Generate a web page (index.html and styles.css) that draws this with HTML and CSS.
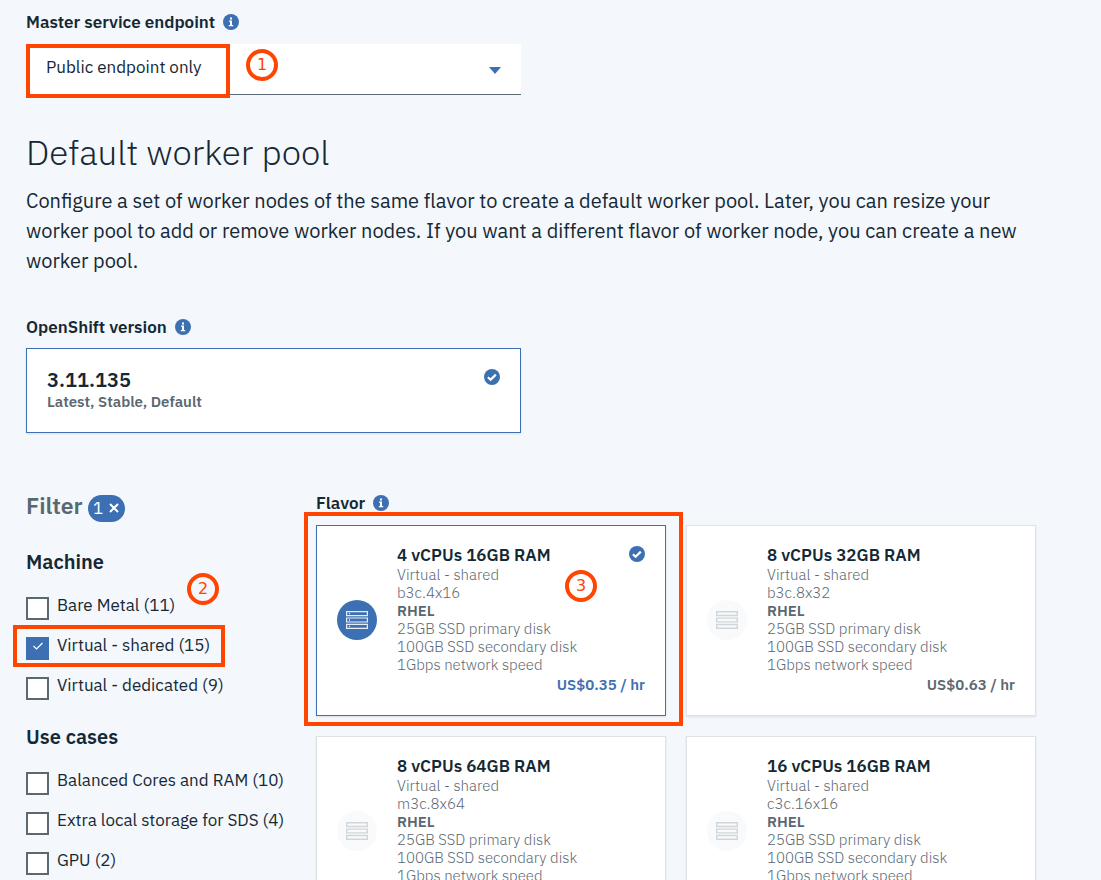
FILE: index.html
```
<!DOCTYPE html>
<html lang="en">
<head>
<meta charset="utf-8">
<meta name="viewport" content="width=device-width, initial-scale=1">
<title>Create cluster</title>
<link rel="stylesheet" href="styles.css">
</head>
<body>
<svg class="defs" aria-hidden="true">
  <symbol id="info" viewBox="0 0 16 16"><circle cx="8" cy="8" r="8" fill="#3d70b2"/><path d="M7 3.5h2v2H7zM6 6.5h3v4.5h1.2v1.2H5.8V11H7V7.7H6z" fill="#fff"/></symbol>
  <symbol id="check" viewBox="0 0 16 16"><circle cx="8" cy="8" r="8" fill="#3d70b2"/><path d="M3.9 8.2l2.7 2.6 5.2-5.2" fill="none" stroke="#fff" stroke-width="2.2"/></symbol>
  <symbol id="server" viewBox="0 0 22 18"><path d="M.7.7h20.6v3.8H.7zM.7 7.1h20.6v3.8H.7zM.7 13.5h20.6v3.8H.7z" fill="none" stroke="currentColor" stroke-width="1.4"/></symbol>
  <symbol id="server-on" viewBox="0 0 22 18"><path d="M.6.6h20.8v4H.6zM.6 7h20.8v4H.6zM.6 13.4h20.8v4H.6z" fill="none" stroke="currentColor" stroke-width="1.2"/><path d="M3.5 1.8v1.6M3.5 8.2v1.6M3.5 14.6v1.6" stroke="currentColor"/></symbol>
</svg>
<main class="page">
  <section class="half">
    <div class="caption"><label for="endpoint">Master service endpoint</label><svg class="icon"><use href="#info"/></svg></div>
    <div class="select-wrap">
      <select id="endpoint" class="select"><option>Public endpoint only</option></select>
      <svg class="caret" viewBox="0 0 12 7"><path d="M0 0h12L6 7z" fill="#3d70b2"/></svg>
      <span class="mark mark-endpoint"></span>
      <span class="step step-endpoint">1</span>
    </div>
  </section>

  <section class="intro">
    <h1>Default worker pool</h1>
    <p>Configure a set of worker nodes of the same flavor to create a default worker pool. Later, you can resize your worker pool to add or remove worker nodes. If you want a different flavor of worker node, you can create a new worker pool.</p>
  </section>

  <section class="half version">
    <div class="caption"><span>OpenShift version</span><svg class="icon"><use href="#info"/></svg></div>
    <label class="card version-card selected">
      <input class="hidden-input" type="radio" name="version" checked>
      <span class="version-text"><strong>3.11.135</strong><span>Latest, Stable, Default</span></span>
      <svg class="icon"><use href="#check"/></svg>
    </label>
  </section>

  <div class="columns">
    <aside class="filters">
      <div class="filter-head"><h2>Filter</h2><button class="pill" type="button" aria-label="Clear 1 filter"><span>1</span><svg viewBox="0 0 10 10"><path d="M1 1l8 8M9 1l-8 8" stroke="#fff" stroke-width="2"/></svg></button></div>
      <fieldset>
        <legend>Machine</legend>
        <label class="option"><input type="checkbox"><span>Bare Metal (11)</span></label>
        <label class="option"><input type="checkbox" checked><span>Virtual - shared (15)</span></label>
        <label class="option"><input type="checkbox"><span>Virtual - dedicated (9)</span></label>
        <span class="mark mark-machine"></span>
        <span class="step step-machine">2</span>
      </fieldset>
      <fieldset>
        <legend>Use cases</legend>
        <label class="option"><input type="checkbox"><span>Balanced Cores and RAM (10)</span></label>
        <label class="option"><input type="checkbox"><span>Extra local storage for SDS (4)</span></label>
        <label class="option"><input type="checkbox"><span>GPU (2)</span></label>
      </fieldset>
    </aside>
    <section class="flavors">
      <div class="caption"><span>Flavor</span><svg class="icon"><use href="#info"/></svg></div>
      <div class="grid">
        <label class="card flavor selected">
          <input class="hidden-input" type="radio" name="flavor" checked>
          <span class="disc"><svg><use href="#server-on"/></svg></span>
          <span class="specs">
            <span class="title"><strong>4 vCPUs 16GB RAM</strong><svg class="icon"><use href="#check"/></svg></span>
            <span>Virtual - shared</span><span>b3c.4x16</span><b>RHEL</b><span>25GB SSD primary disk</span><span>100GB SSD secondary disk</span><span>1Gbps network speed</span>
            <span class="price">US$0.35 / hr</span>
          </span>
          <span class="mark mark-flavor"></span>
          <span class="step step-flavor">3</span>
        </label>
        <label class="card flavor">
          <input class="hidden-input" type="radio" name="flavor">
          <span class="disc"><svg><use href="#server"/></svg></span>
          <span class="specs">
            <span class="title"><strong>8 vCPUs 32GB RAM</strong></span>
            <span>Virtual - shared</span><span>b3c.8x32</span><b>RHEL</b><span>25GB SSD primary disk</span><span>100GB SSD secondary disk</span><span>1Gbps network speed</span>
            <span class="price">US$0.63 / hr</span>
          </span>
        </label>
        <label class="card flavor">
          <input class="hidden-input" type="radio" name="flavor">
          <span class="disc"><svg><use href="#server"/></svg></span>
          <span class="specs">
            <span class="title"><strong>8 vCPUs 64GB RAM</strong></span>
            <span>Virtual - shared</span><span>m3c.8x64</span><b>RHEL</b><span>25GB SSD primary disk</span><span>100GB SSD secondary disk</span><span>1Gbps network speed</span>
            <span class="price">&nbsp;</span>
          </span>
        </label>
        <label class="card flavor">
          <input class="hidden-input" type="radio" name="flavor">
          <span class="disc"><svg><use href="#server"/></svg></span>
          <span class="specs">
            <span class="title"><strong>16 vCPUs 16GB RAM</strong></span>
            <span>Virtual - shared</span><span>c3c.16x16</span><b>RHEL</b><span>25GB SSD primary disk</span><span>100GB SSD secondary disk</span><span>1Gbps network speed</span>
            <span class="price">&nbsp;</span>
          </span>
        </label>
      </div>
    </section>
  </div>
</main>
</body>
</html>
```
FILE: styles.css
```
:root {
  --ink: #152935;
  --muted: #5a6872;
  --blue: #3d70b2;
  --mark: #ff4500;
}
* { box-sizing: border-box; }
body {
  margin: 0;
  height: 100vh;
  overflow: hidden;
  background: #f4f7fb;
  color: var(--ink);
  font: 17px/24px "IBM Plex Sans", "Noto Sans", sans-serif;
}
h1, h2, p, fieldset { margin: 0; padding: 0; border: 0; }
.defs { position: absolute; width: 0; height: 0; }
.page { max-width: 1062px; padding: 10px 26px; }
.half { width: calc(50% - 10px); }
.caption { display: flex; align-items: center; gap: 8px; font-weight: 600; }
.icon { width: 16px; height: 16px; flex: none; }

.select-wrap { position: relative; margin-top: 10px; }
.select {
  display: block;
  width: 100%;
  height: 51px;
  padding: 0 20px 4px;
  border: 0;
  border-bottom: 1px solid var(--muted);
  border-radius: 0;
  background: #fff;
  color: var(--ink);
  font: inherit;
  appearance: none;
}
.caret { position: absolute; right: 20px; top: 23px; width: 12px; height: 7px; pointer-events: none; }

.intro { margin-top: 34px; }
h1 { font-size: 35px; line-height: 46px; font-weight: 300; }
.intro p { margin-top: 11px; font-size: 20px; line-height: 30px; }

.version { margin-top: 39px; }
.card { display: flex; position: relative; border: 1px solid #dfe3e6; background: #fff; box-shadow: 0 1px 2px rgba(0, 0, 0, 0.1); }
.card.selected { border-color: var(--blue); }
.version-card { justify-content: space-between; margin-top: 9px; padding: 20px 20px 19px; }
.version-text { display: flex; flex-direction: column; color: var(--muted); font-size: 15px; font-weight: 600; line-height: 22px; }
.version-text strong { color: var(--ink); font-size: 20px; font-weight: 600; }
.hidden-input { position: absolute; opacity: 0; width: 1px; height: 1px; margin: 0; }

.columns { display: grid; grid-template-columns: 270px 1fr; gap: 20px; margin-top: 58px; }
.filter-head { display: flex; align-items: center; gap: 5px; height: 30px; }
h2 { color: var(--muted); font-size: 23px; line-height: 28px; margin-bottom: 3px; font-weight: 600; }
.pill {
  display: flex;
  align-items: center;
  justify-content: center;
  gap: 6px;
  width: 37px;
  height: 27px;
  margin-top: 5px;
  padding: 0 0 2px;
  border: 0;
  border-radius: 14px;
  background: var(--blue);
  color: #fff;
  font: inherit;
}
.pill svg { width: 10px; height: 10px; }
fieldset { position: relative; min-width: 0; margin-top: 28px; }
.filter-head + fieldset { margin-top: 29px; }
legend { padding: 0; margin-bottom: 19px; font-size: 20px; font-weight: 600; }
.option { display: flex; gap: 8px; height: 24px; margin-bottom: 16px; white-space: nowrap; }
.option:last-of-type { margin-bottom: 0; }
.option input {
  appearance: none;
  flex: none;
  width: 23px;
  height: 23px;
  margin: 4px 0 0;
  border: 2px solid var(--muted);
  background: #fff;
}
.option input:checked {
  border-color: var(--blue);
  background: var(--blue) url("data:image/svg+xml,%3Csvg xmlns='http://www.w3.org/2000/svg' viewBox='0 0 10 8'%3E%3Cpath d='M.5 4l3 3 6-6' fill='none' stroke='white' stroke-width='1.2'/%3E%3C/svg%3E") 5px 3px / 10px 8px no-repeat;
}

.grid { display: grid; grid-template-columns: 1fr 1fr; gap: 20px; margin-top: 10px; }
.flavor { align-items: center; gap: 20px; padding: 18px 20px 20px; }
.disc { display: flex; align-items: center; justify-content: center; flex: none; width: 40px; height: 40px; border-radius: 50%; background: #f9fafc; color: #d0d6d9; }
.selected .disc { background: var(--blue); color: #e6edf6; }
.disc svg { width: 22px; height: 18px; }
.specs { display: flex; flex-direction: column; flex: 1; color: var(--muted); font-size: 15px; line-height: 18px; font-weight: 300; }
.specs b { font-weight: 600; }
.title { display: flex; align-items: flex-start; justify-content: space-between; color: var(--ink); font-size: 17px; line-height: 22px; }
.title strong { font-weight: 600; }
.title .icon { margin-top: 2px; }
.specs .price { align-self: flex-end; line-height: 21px; font-weight: 600; }
.selected .price { color: var(--blue); }

.mark, .step { position: absolute; border: 4px solid var(--mark); pointer-events: none; }
.step { width: 32px; height: 32px; border-radius: 50%; color: var(--mark); font: 16px/24px "DejaVu Sans", sans-serif; text-align: center; }
.mark-endpoint { left: 0; top: 0; width: 204px; height: 54px; }
.step-endpoint { left: 220px; top: 5px; }
.mark-machine { left: -13px; top: 32px; width: 212px; height: 42px; }
.step-machine { left: 161px; top: -20px; }
.mark-flavor { left: -13px; top: -14px; width: 379px; height: 214px; }
.step-flavor { left: 248px; top: 44px; }
```
